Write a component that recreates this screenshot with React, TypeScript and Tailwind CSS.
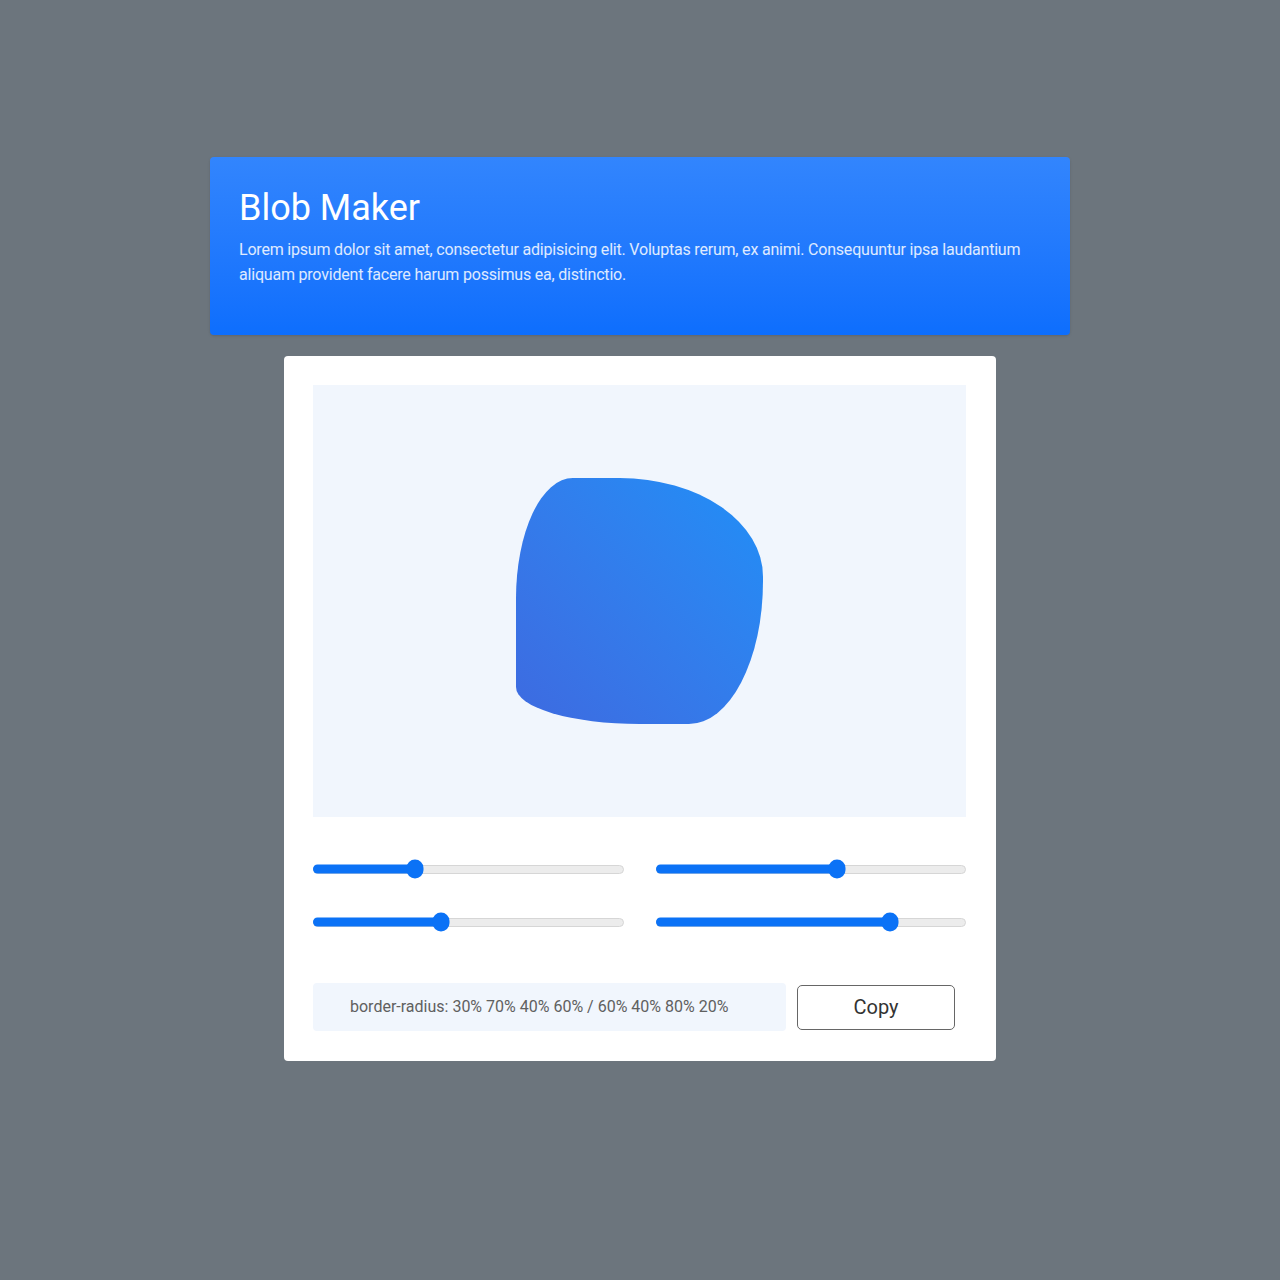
import React from "react";

const sliders = [102, 181, 128, 234];

function Slider({ fill }: { fill: number }) {
  return (
    <div className="relative h-[24px] flex items-center">
      <div className="w-full h-[9px] rounded-full bg-[#ececec] border border-[#d6d6d6]" />
      <div
        className="absolute left-0 top-1/2 -translate-y-1/2 h-[9px] rounded-full bg-[#0b72f6]"
        style={{ width: fill }}
      />
      <div
        className="absolute top-1/2 -translate-y-1/2 -translate-x-1/2 w-[17px] h-[19px] rounded-full bg-[#0b72f6]"
        style={{ left: fill }}
      />
    </div>
  );
}

export default function App() {
  return (
    <div
      className="min-h-[1280px] bg-[#6c757d] pt-[157px]"
      style={{ fontFamily: "Roboto, 'Liberation Sans', sans-serif" }}
    >
      <div className="w-[860px] mx-auto rounded-[4px] bg-linear-to-b from-[#3285fd] to-[#0d6efd] px-[29px] pt-[30px] pb-[48px] shadow-sm">
        <h1 className="text-[36px] leading-[43px] text-white font-normal">Blob Maker</h1>
        <p className="mt-[7px] text-[16px] leading-[25px] text-white/85 tracking-[-0.2px]">
          Lorem ipsum dolor sit amet, consectetur adipisicing elit. Voluptas rerum, ex animi. Consequuntur ipsa laudantium aliquam provident facere harum possimus ea, distinctio.
        </p>
      </div>

      <div className="w-[712px] mx-auto mt-[21px] bg-white rounded-[4px] pl-[29px] pr-[30px] pt-[29px] pb-[30px]">
        <div className="h-[432px] bg-[#f1f6fd] flex items-center justify-center">
          <div className="w-[247px] h-[246px] bg-linear-to-tr from-[#3d6ae0] to-[#1e8ff7] rounded-[23%_58%_30%_50%/49%_40%_58%_15%]" />
        </div>

        <div className="mt-[40px] grid grid-cols-2 gap-x-[32px] gap-y-[29px]">
          {sliders.map((f, i) => (
            <Slider key={i} fill={f} />
          ))}
        </div>

        <div className="mt-[49px] flex items-center">
          <div className="w-[473px] h-[48px] rounded-[4px] bg-[#f1f6fd] flex items-center pl-[37px] text-[16px] text-[#606060]">
            border-radius: 30% 70% 40% 60% / 60% 40% 80% 20%
          </div>
          <button className="ml-[11px] w-[158px] h-[45px] rounded-[5px] border-[1.5px] border-[#666] bg-white text-[20px] text-[#333]">
            Copy
          </button>
        </div>
      </div>
    </div>
  );
}
